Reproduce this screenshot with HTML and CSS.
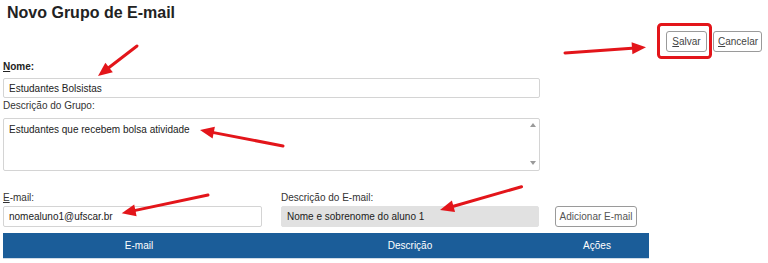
FILE: index.html
```html
<!DOCTYPE html>
<html lang="pt-BR">
<head>
<meta charset="utf-8">
<title>Novo Grupo de E-mail</title>
<link rel="stylesheet" href="styles.css">
</head>
<body>
<div class="page">
  <h1 class="title">Novo Grupo de E-mail</h1>
  <div class="toolbar">
    <button class="btn"><u>S</u>alvar</button>
    <button class="btn"><u>C</u>ancelar</button>
  </div>
  <form class="form">
    <label class="label label-bold label-nome"><u>N</u>ome:</label>
    <input class="input input-nome" type="text" value="Estudantes Bolsistas">
    <label class="label label-desc">Descrição do Grupo:</label>
    <div class="ta-wrap">
      <textarea class="textarea">Estudantes que recebem bolsa atividade</textarea>
      <span class="sb-up"></span>
      <span class="sb-down"></span>
    </div>
    <div class="email-row">
      <div class="col col-email">
        <label class="label"><u>E</u>-mail:</label>
        <input class="input" type="text" value="nomealuno1@ufscar.br">
      </div>
      <div class="col col-desc">
        <label class="label">Descrição do E-mail:</label>
        <input class="input input-gray" type="text" value="Nome e sobrenome do aluno 1">
      </div>
      <button type="button" class="btn btn-add">Adicionar E-mail</button>
    </div>
  </form>
  <div class="table-head">
    <div class="th th-email">E-mail</div>
    <div class="th th-desc">Descrição</div>
    <div class="th th-acoes">Ações</div>
  </div>
</div>
<svg class="annot" width="768" height="263" viewBox="0 0 768 263">
  <rect x="658.5" y="24.5" width="52" height="33" rx="3" fill="none" stroke="#e3151a" stroke-width="3"/>
  <g stroke="#e3151a" stroke-width="3" stroke-linecap="round" fill="#e3151a">
    <line x1="137" y1="46" x2="109" y2="67.5"/>
    <line x1="565" y1="53" x2="632" y2="48.2"/>
    <line x1="283" y1="146" x2="213.7" y2="132.6"/>
    <line x1="208" y1="195" x2="135.4" y2="210.4"/>
    <line x1="521.5" y1="186.7" x2="453.5" y2="206.2"/>
  </g>
  <g fill="#e3151a">
    <polygon points="98,76 105.4,62.7 112.8,72.3"/>
    <polygon points="646,47.3 632.4,54.2 631.6,42.2"/>
    <polygon points="200,130 214.9,126.7 212.6,138.5"/>
    <polygon points="121.7,213.3 134.2,204.5 136.6,216.3"/>
    <polygon points="440,210 451.9,200.4 455.1,212"/>
  </g>
</svg>
</body>
</html>
```
FILE: styles.css
```css
html, body {
  margin: 0;
  padding: 0;
  background: #ffffff;
}
body {
  font-family: "Liberation Sans", Arial, sans-serif;
  font-size: 10px;
  color: #333333;
  width: 768px;
  height: 263px;
  overflow: hidden;
  position: relative;
}
.page {
  padding: 0 0 0 3px;
}
.title {
  margin: 0;
  padding: 4px 0 0 4px;
  font-size: 16px;
  line-height: 18px;
  font-weight: bold;
  color: #222222;
}
.toolbar {
  display: flex;
  justify-content: flex-end;
  gap: 6px;
  padding-right: 6px;
  margin-top: 9px;
}
.btn {
  font-family: "Liberation Sans", Arial, sans-serif;
  font-size: 10px;
  color: #444444;
  background: #ffffff;
  border: 1px solid #9a9a9a;
  border-radius: 3px;
  height: 21px;
  padding: 0 4px;
  line-height: 19px;
  margin: 0;
}
.toolbar .btn:first-child {
  width: 41px;
}
.toolbar .btn:last-child {
  width: 49px;
}
.form {
  margin: 0;
  width: 537px;
  display: flex;
  flex-direction: column;
}
.label {
  display: block;
  line-height: 14px;
  color: #333333;
}
.label-bold {
  font-weight: bold;
  color: #222222;
}
.label-nome {
  margin-top: 8px;
}
.input {
  box-sizing: border-box;
  font-family: "Liberation Sans", Arial, sans-serif;
  font-size: 10px;
  color: #222222;
  height: 20px;
  border: 1px solid #d4d4d4;
  border-radius: 2px;
  padding: 0 5px;
  margin: 0;
  background: #ffffff;
  width: 100%;
}
.input-nome {
  margin-top: 4px;
  width: 537px;
}
.label-desc {
  margin-top: 1px;
}
.ta-wrap {
  position: relative;
  margin-top: 5px;
  width: 537px;
  height: 53px;
}
.textarea {
  box-sizing: border-box;
  width: 537px;
  height: 53px;
  resize: none;
  font-family: "Liberation Sans", Arial, sans-serif;
  font-size: 10px;
  color: #222222;
  border: 1px solid #d4d4d4;
  border-radius: 2px;
  padding: 5px 5px;
  margin: 0;
  display: block;
  overflow: hidden;
}
.sb-up, .sb-down {
  position: absolute;
  right: 4px;
  width: 0;
  height: 0;
  border-left: 3px solid transparent;
  border-right: 3px solid transparent;
}
.sb-up {
  top: 5px;
  border-bottom: 4px solid #9a9a9a;
}
.sb-down {
  bottom: 6px;
  border-top: 4px solid #9a9a9a;
}
.email-row {
  display: flex;
  align-items: flex-end;
  margin-top: 20px;
  width: 640px;
}
.col {
  display: flex;
  flex-direction: column;
  gap: 1px;
}
.col-email {
  width: 259px;
}
.col-email .input,
.col-desc .input {
  height: 21px;
}
.col-desc {
  width: 258px;
  margin-left: 19px;
}
.input-gray {
  background: #e1e1e1;
  border-color: #e1e1e1;
}
.btn-add {
  margin-left: 16px;
  width: 82px;
  padding: 0;
  color: #555555;
}
.table-head {
  display: flex;
  width: 646px;
  height: 25px;
  margin-top: 6px;
  background: #1b5d99;
  color: #ffffff;
  border-bottom: 1px solid #cfdbe7;
}
.th {
  line-height: 25px;
  text-align: center;
}
.th-email {
  width: 272px;
}
.th-desc {
  width: 270px;
}
.th-acoes {
  width: 104px;
}
.annot {
  position: absolute;
  left: 0;
  top: 0;
  pointer-events: none;
}
```
